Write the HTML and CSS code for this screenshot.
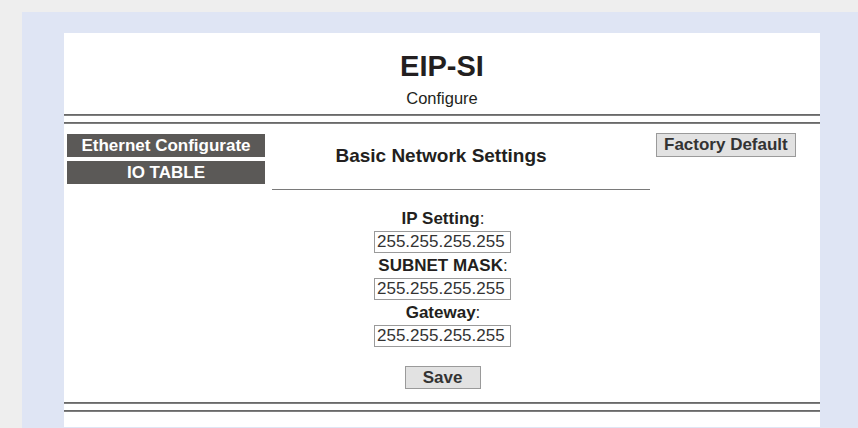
FILE: index.html
```html
<!DOCTYPE html>
<html lang="en">
<head>
<meta charset="utf-8">
<title>EIP-SI Configure</title>
<link rel="stylesheet" href="styles.css">
</head>
<body>
<div class="frame">
  <div class="page">
    <header class="head">
      <h1 class="title">EIP-SI</h1>
      <div class="subtitle">Configure</div>
    </header>
    <div class="double-rule"><span></span><span></span></div>

    <div class="toolbar">
      <nav class="menu">
        <a class="menu-item" href="#">Ethernet Configurate</a>
        <a class="menu-item" href="#">IO TABLE</a>
      </nav>
      <div class="section">
        <h2 class="section-title">Basic Network Settings</h2>
        <div class="section-rule"></div>
      </div>
      <div class="actions">
        <button class="btn" type="button">Factory Default</button>
      </div>
    </div>

    <form class="settings">
      <label class="field-label"><b>IP Setting</b>:</label>
      <input class="field" type="text" value="255.255.255.255">
      <label class="field-label"><b>SUBNET MASK</b>:</label>
      <input class="field" type="text" value="255.255.255.255">
      <label class="field-label"><b>Gateway</b>:</label>
      <input class="field" type="text" value="255.255.255.255">
      <button class="btn btn-save" type="button">Save</button>
    </form>

    <div class="double-rule foot"><span></span><span></span></div>
  </div>
</div>
</body>
</html>
```

FILE: styles.css
```css
html, body {
  margin: 0;
  padding: 0;
}

body {
  background: #eeeeee;
  font-family: "Liberation Sans", Arial, sans-serif;
  color: #231f20;
  overflow: hidden;
}

.frame {
  margin: 12px 0 0 22px;
  padding: 21px 38px 1px 42px;
  background: #dfe5f4;
}

.page {
  background: #ffffff;
  height: 394px;
}

/* header */
.head {
  padding-top: 16px;
  text-align: center;
}

.title {
  margin: 0;
  font-size: 29px;
  line-height: 34px;
  font-weight: bold;
}

.subtitle {
  font-size: 16.5px;
  line-height: 30px;
}

/* two thin grey rules */
.double-rule {
  display: flex;
  flex-direction: column;
  gap: 6px;
  padding-top: 1px;
}

.double-rule span {
  display: block;
  height: 2px;
  background: linear-gradient(#5e5e5e, #8a8a8a);
}

.double-rule.foot {
  margin-top: 12px;
}

/* menu / title / action row */
.toolbar {
  display: grid;
  grid-template-columns: 208px 378px 1fr;
  padding-top: 9px;
}

.menu {
  display: flex;
  flex-direction: column;
  gap: 4px;
  padding: 1px 0 0 3px;
}

.menu-item {
  display: block;
  width: 198px;
  height: 23px;
  background: #5b5957;
  color: #ffffff;
  font-size: 17px;
  font-weight: bold;
  line-height: 23px;
  text-align: center;
  text-decoration: none;
}

.section-title {
  margin: 11px 0 0;
  padding-right: 40px;
  font-size: 19px;
  line-height: 24px;
  font-weight: bold;
  text-align: center;
}

.section-rule {
  margin-top: 21px;
  height: 1px;
  background: #7a7a7a;
}

.actions {
  padding-left: 6px;
}

.btn {
  height: 24px;
  padding: 0 7px;
  background: #e2e2e2;
  border: 1px solid #9a9a9a;
  border-radius: 0;
  color: #333333;
  font-family: "Liberation Sans", Arial, sans-serif;
  font-size: 17px;
  font-weight: bold;
  line-height: 22px;
}

/* form fields */
.settings {
  display: flex;
  flex-direction: column;
  align-items: center;
  margin: 16px 0 0;
}

.field-label {
  font-size: 17px;
  line-height: 25px;
  padding-left: 2px;
}

.field {
  box-sizing: border-box;
  width: 137px;
  height: 22px;
  margin: 0 0 0 1px;
  padding: 0 2px;
  border: 1px solid #9a9a9a;
  background: #ffffff;
  color: #333333;
  font-family: "Liberation Sans", Arial, sans-serif;
  font-size: 17px;
  line-height: 20px;
}

.btn-save {
  width: 76px;
  height: 23px;
  margin-top: 19px;
  margin-left: 1px;
  padding: 0;
}
```
